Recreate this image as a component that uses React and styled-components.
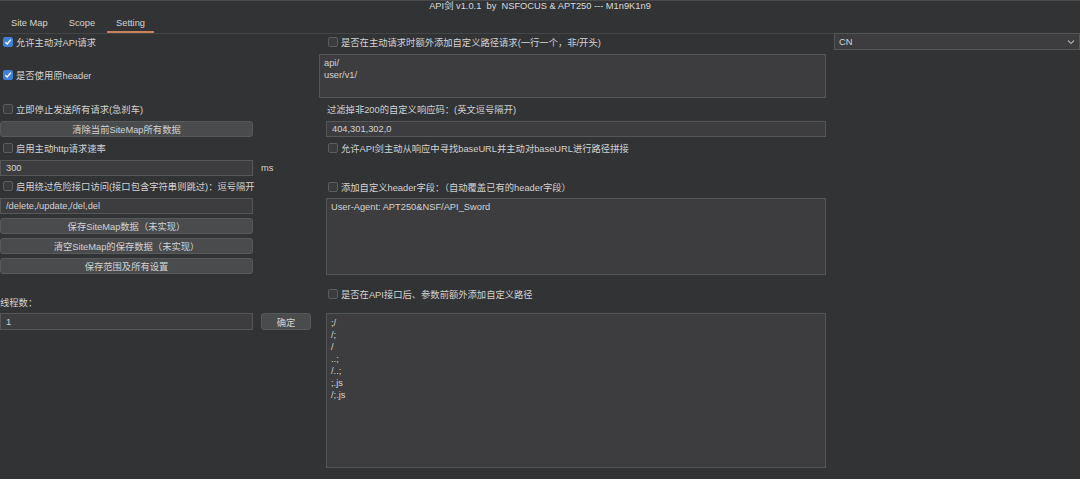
import React from 'react';
import styled, { createGlobalStyle } from 'styled-components';

const Global = createGlobalStyle`
  html, body {
    margin: 0;
    padding: 0;
    background: #323335;
  }
  body {
    font-family: "Liberation Sans", Arial, "Noto Sans CJK SC", sans-serif;
    font-size: 9.3px;
    color: #d2d2d2;
  }
`;

const Window = styled.div`
  width: 1080px;
  height: 479px;
  background: #323335;
  border-top: 1px solid #4a4b4d;
  box-sizing: border-box;
  overflow: hidden;
`;

const Title = styled.div`
  height: 11px;
  line-height: 11px;
  text-align: center;
  white-space: pre;
  color: #dadada;
`;

const TabBar = styled.div`
  display: flex;
  gap: 3px;
  height: 19px;
  margin-top: 2px;
  padding-left: 2px;
  border-bottom: 1px solid #444547;
`;

const Tab = styled.div`
  display: flex;
  align-items: center;
  padding: 0 9px;
  border-bottom: 2px solid ${p => (p.$active ? '#c9825a' : 'transparent')};
  color: #d4d4d4;
  box-sizing: border-box;
`;

const Body = styled.div`
  display: flex;
  align-items: flex-start;
`;

const LeftCol = styled.div`
  width: 253px;
  flex-shrink: 0;
  display: flex;
  flex-direction: column;
`;

const MidCol = styled.div`
  width: 507px;
  flex-shrink: 0;
  margin-left: 66px;
  display: flex;
  flex-direction: column;
`;

const RightCol = styled.div`
  flex: 1;
  margin-left: 8px;
`;

const Row = styled.div`
  display: flex;
  align-items: center;
  height: ${p => p.$h}px;
  margin-top: ${p => p.$mt || 0}px;
  padding-left: ${p => p.$indent || 0}px;
  white-space: nowrap;
`;

const Box = styled.span`
  flex-shrink: 0;
  width: 10px;
  height: 10px;
  margin-right: 3px;
  border-radius: 2px;
  box-sizing: border-box;
  display: inline-flex;
  align-items: center;
  justify-content: center;
  background: ${p => (p.$checked ? '#3f80d6' : '#3b3c3e')};
  border: 1px solid ${p => (p.$checked ? '#3f80d6' : '#5c5d60')};
`;

const Field = styled.input`
  display: block;
  flex-shrink: 0;
  box-sizing: border-box;
  width: ${p => p.$w || '100%'};
  height: ${p => p.$h || 16}px;
  margin: ${p => p.$mt || 0}px 0 0 ${p => p.$indent || 0}px;
  padding: 0 5px;
  background: #3d3d3f;
  border: 1px solid #555658;
  color: #d2d2d2;
  font: inherit;
  outline: none;
`;

const Area = styled.textarea`
  display: block;
  box-sizing: border-box;
  width: calc(100% - ${p => p.$indent || 0}px);
  height: ${p => p.$h}px;
  margin: ${p => p.$mt || 0}px 0 0 ${p => p.$indent || 0}px;
  padding: ${p => p.$pt || 2}px 4px 2px;
  background: #3d3d3f;
  border: 1px solid #555658;
  color: #d2d2d2;
  font: inherit;
  line-height: 12px;
  resize: none;
  outline: none;
  overflow: hidden;
`;

const Button = styled.button`
  display: block;
  flex-shrink: 0;
  box-sizing: border-box;
  width: ${p => p.$w || '100%'};
  height: ${p => p.$h || 16}px;
  margin-top: ${p => p.$mt || 0}px;
  padding: 0;
  background: #4a4b4d;
  border: 1px solid #58595b;
  border-radius: 3px;
  color: #d2d2d2;
  font: inherit;
  cursor: pointer;
`;

const InlineGroup = styled.div`
  display: flex;
  align-items: center;
  gap: ${p => p.$gap || 0}px;
  width: ${p => p.$w || 253}px;
  margin-top: ${p => p.$mt || 0}px;
`;

const Unit = styled.span`
  margin-left: 8px;
  color: #d2d2d2;
`;

const Select = styled.div`
  display: flex;
  align-items: center;
  justify-content: space-between;
  height: 17px;
  margin-top: -1px;
  padding: 0 4px;
  box-sizing: border-box;
  background: #3d3d3f;
  border: 1px solid #555658;
  color: #d6d6d6;
`;

const Check = ({ checked, children, ...rest }) => (
  <Row {...rest}>
    <Box $checked={checked}>
      {checked && (
        <svg width="8" height="8" viewBox="0 0 8 8">
          <polyline points="1.3,4.2 3.2,6 6.8,1.6" fill="none" stroke="#fff" strokeWidth="1.4" />
        </svg>
      )}
    </Box>
    {children}
  </Row>
);

export default function App() {
  return (
    <Window>
      <Global />
      <Title>{'API剑 v1.0.1  by  NSFOCUS & APT250 --- M1n9K1n9'}</Title>
      <TabBar>
        <Tab>Site Map</Tab>
        <Tab>Scope</Tab>
        <Tab $active>Setting</Tab>
      </TabBar>
      <Body>
        <LeftCol>
          <Check checked $h={15} $indent={3}>允许主动对API请求</Check>
          <Check checked $h={52} $indent={3}>是否使用原header</Check>
          <Check $h={16} $indent={3}>立即停止发送所有请求(急刹车)</Check>
          <Button $mt={4}>清除当前SiteMap所有数据</Button>
          <Check $h={22} $indent={3}>启用主动http请求速率</Check>
          <InlineGroup $mt={1} $w={290}>
            <Field $w="253px" readOnly value="300" />
            <Unit>ms</Unit>
          </InlineGroup>
          <Check $h={20} $indent={3}>启用绕过危险接口访问(接口包含字符串则跳过)：逗号隔开</Check>
          <Field $mt={2} readOnly value="/delete,/update,/del,del" />
          <Button $mt={4}>保存SiteMap数据（未实现）</Button>
          <Button $mt={4}>清空SiteMap的保存数据（未实现）</Button>
          <Button $mt={4}>保存范围及所有设置</Button>
          <Row $h={20} $mt={18}>线程数：</Row>
          <InlineGroup $mt={1} $gap={8} $w={311}>
            <Field $w="253px" $h={17} readOnly value="1" />
            <Button $w="50px" $h={17}>确定</Button>
          </InlineGroup>
        </LeftCol>

        <MidCol>
          <Check $h={16} $indent={9}>是否在主动请求时额外添加自定义路径请求(一行一个，非/开头)</Check>
          <Area $mt={4} $h={44} readOnly value={'api/\nuser/v1/'} />
          <Row $h={22} $indent={8}>过滤掉非200的自定义响应码：(英文逗号隔开)</Row>
          <Field $mt={1} $indent={7} $w="500px" readOnly value="404,301,302,0" />
          <Check $h={22} $indent={9}>允许API剑主动从响应中寻找baseURL并主动对baseURL进行路径拼接</Check>
          <Row $h={17} />
          <Check $h={22} $indent={9}>添加自定义header字段：（自动覆盖已有的header字段）</Check>
          <Area $h={77} $indent={7} readOnly value="User-Agent: APT250&NSF/API_Sword" />
          <Check $h={20} $mt={9} $indent={9}>是否在API接口后、参数前额外添加自定义路径</Check>
          <Area
            $mt={9}
            $h={155}
            $indent={7}
            $pt={3}
            readOnly
            value={';/\n/;\n/\n..;\n/..;\n;.js\n/;.js'}
          />
        </MidCol>

        <RightCol>
          <Select>
            <span>CN</span>
            <svg width="8" height="6" viewBox="0 0 8 6">
              <polyline points="1,1.5 4,4.5 7,1.5" fill="none" stroke="#aaa" strokeWidth="1.1" />
            </svg>
          </Select>
        </RightCol>
      </Body>
    </Window>
  );
}
